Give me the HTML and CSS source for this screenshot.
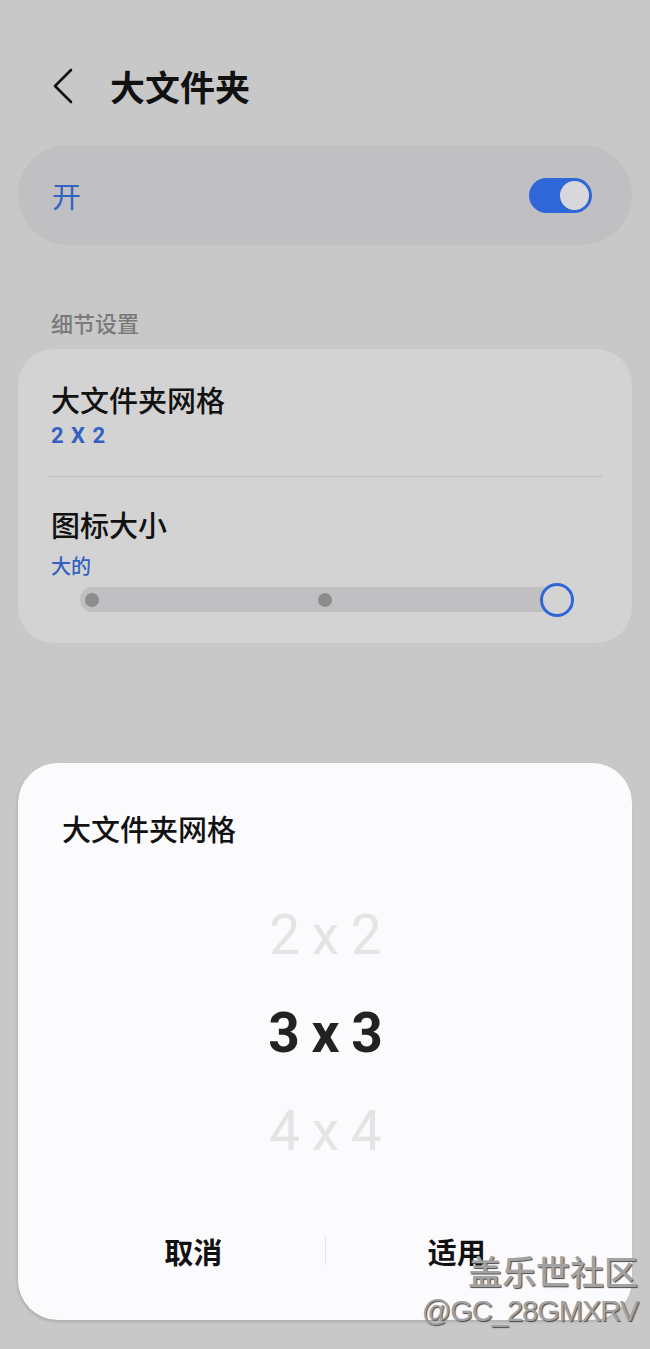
FILE: index.html
```html
<!DOCTYPE html>
<html>
<head>
  <meta charset="UTF-8">
  <title>大文件夹</title>
  <link rel="stylesheet" href="styles.css">
</head>
<body>
  <div class="header">
    <svg class="back" width="22" height="36" viewBox="0 0 22 36">
      <polyline points="19,2 3,18 19,34" fill="none" stroke="#111" stroke-width="2.6" stroke-linecap="round" stroke-linejoin="round"/>
    </svg>
    <h1>大文件夹</h1>
  </div>

  <div class="switch-card">
    <span class="switch-label">开</span>
    <div class="toggle"><div class="knob"></div></div>
  </div>

  <div class="section-label">细节设置</div>
  <div class="card">
    <div class="row">
      <div class="row-title">大文件夹网格</div>
      <div class="row-sub num">2 X 2</div>
    </div>
    <div class="divider"></div>
    <div class="row">
      <div class="row-title">图标大小</div>
      <div class="row-sub small">大的</div>
      <div class="slider">
        <span class="dot"></span>
        <span class="dot dot-mid"></span>
        <span class="ring"></span>
      </div>
    </div>
  </div>

  <div class="dialog">
    <div class="dialog-title">大文件夹网格</div>
    <div class="picker">
      <div class="pick faded">2 x 2</div>
      <div class="pick current">3 x 3</div>
      <div class="pick faded">4 x 4</div>
    </div>
    <div class="actions">
      <div class="action">取消</div>
      <div class="sep"></div>
      <div class="action">适用</div>
    </div>
  </div>

  <div class="watermark">
    <div class="wm-big">盖乐世社区</div>
    <div class="wm-small">@GC_28GMXRV</div>
  </div>
</body>
</html>
```

FILE: styles.css
```css
/* Reset & basic styling */
* { box-sizing: border-box; }
body {
  margin: 0;
  padding: 0;
  position: relative;
  height: 1349px;
  overflow: hidden;
  font-family: "Noto Sans CJK SC", sans-serif;
  background: #c8c8c8;
  color: #111;
}
/* Top bar */
.header {
  display: flex;
  align-items: center;
  height: 50px;
  margin-top: 61px;
  padding-left: 52px;
}
.back { flex: none; }
h1 {
  margin: 0 0 0 36px;
  font-size: 35px;
  line-height: 44px;
  font-weight: 700;
}
/* Master switch */
.switch-card {
  display: flex;
  align-items: center;
  justify-content: space-between;
  height: 100px;
  margin: 34px 18px 0;
  padding: 0 40px 0 34px;
  background: #c0c0c2;
  border-radius: 50px;
}
.switch-label {
  color: #3463c4;
  font-size: 29px;
  line-height: 36px;
}
.toggle {
  display: flex;
  justify-content: flex-end;
  align-items: center;
  width: 63px;
  height: 35px;
  padding: 3px;
  border-radius: 18px;
  background: #2f66d8;
}
.knob {
  width: 29px;
  height: 29px;
  border-radius: 50%;
  background: #d8d8dc;
}
/* Details */
.section-label {
  margin: 63px 0 0 51px;
  font-size: 22px;
  line-height: 28px;
  color: #7a7a7a;
  font-weight: 500;
}
.card {
  margin: 13px 18px 0;
  padding: 32px 0 31px;
  background: #d3d3d3;
  border-radius: 36px;
}
.row { padding: 0 33px; }
.row-title {
  font-size: 29px;
  line-height: 36px;
  font-weight: 500;
}
.row-sub {
  margin-top: 5px;
  color: #3461c1;
}
.num {
  font-family: Roboto, "Noto Sans CJK SC", sans-serif;
  font-size: 22px;
  line-height: 28px;
  font-weight: 700;
  letter-spacing: 0.5px;
  word-spacing: 1px;
}
.small {
  margin-top: 11px;
  font-size: 20px;
  line-height: 26px;
  font-weight: 500;
}
.divider {
  height: 1px;
  margin: 26px 30px 29px;
  background: #bcbcbc;
}
.slider {
  display: flex;
  align-items: center;
  width: 490px;
  height: 25px;
  margin: 8px 0 0 29px;
  padding-left: 5px;
  background: #c0c0c2;
  border-radius: 13px;
}
.dot {
  width: 14px;
  height: 14px;
  border-radius: 50%;
  background: #8c8c8e;
  flex: none;
}
.dot-mid { margin-left: 219px; }
.ring {
  flex: none;
  width: 34px;
  height: 34px;
  margin-left: 208px;
  border: 3px solid #2f66d8;
  border-radius: 50%;
  background: #d3d3d3;
}
/* Picker dialog */
.dialog {
  margin: 120px 18px 0;
  padding: 47px 44px 39px;
  background: #fbfbfd;
  border-radius: 40px;
  box-shadow: -1px 2px 3px rgba(0,0,0,0.12);
}
.dialog-title {
  font-size: 29px;
  line-height: 36px;
  font-weight: 500;
}
.picker { margin-top: 40px; }
.pick {
  height: 98px;
  line-height: 98px;
  text-align: center;
  font-family: Roboto, sans-serif;
  font-size: 55px;
  letter-spacing: -1px;
}
.faded { color: #e4e4e6; }
.current {
  color: #222;
  font-weight: 700;
}
.actions {
  display: flex;
  align-items: center;
  height: 60px;
  margin-top: 41px;
}
.action {
  flex: 1;
  text-align: center;
  font-size: 29px;
  line-height: 36px;
  font-weight: 700;
}
.sep {
  width: 1px;
  height: 28px;
  background: #e2e2e4;
}
/* Watermark overlay */
.watermark {
  position: absolute;
  top: 1249px;
  right: 12px;
  text-align: right;
  color: #a2a2a2;
  text-shadow: 1px 1px 1px #4a4a4a;
}
.wm-big {
  font-size: 34px;
  line-height: 44px;
  font-weight: 500;
}
.wm-small {
  font-family: "Liberation Sans", sans-serif;
  font-size: 29px;
  line-height: 36px;
  letter-spacing: -1px;
}
```
